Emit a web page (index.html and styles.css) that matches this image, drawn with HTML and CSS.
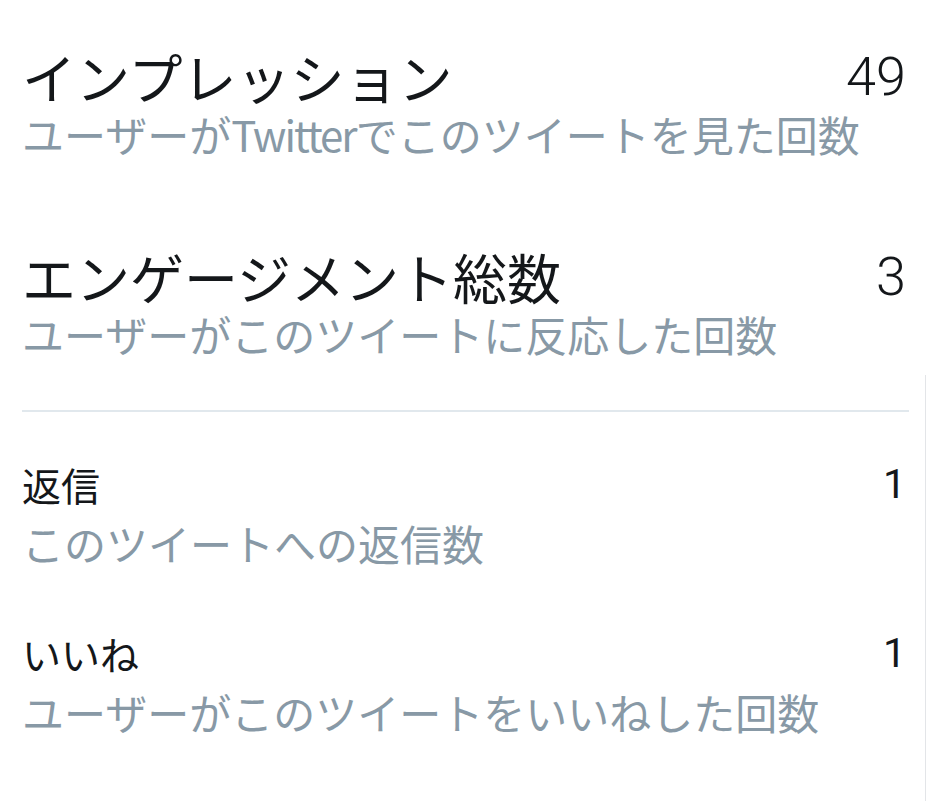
FILE: index.html
```html
<html>
<head>
    <title>ツイートアクティビティ</title>
    <link rel="stylesheet" href="styles.css">
</head>
<body>
<div class="page">
    <div class="content">
        <div class="metric big">
            <div class="head">
                <span class="label">インプレッション</span>
                <span class="value">49</span>
            </div>
            <div class="desc">ユーザーが<span class="latin">Twitter</span>でこのツイートを見た回数</div>
        </div>
        <div class="metric big">
            <div class="head">
                <span class="label">エンゲージメント総数</span>
                <span class="value">3</span>
            </div>
            <div class="desc">ユーザーがこのツイートに反応した回数</div>
        </div>

        <div class="divider"></div>

        <div class="metric small">
            <div class="head">
                <span class="label">返信</span>
                <span class="value">1</span>
            </div>
            <div class="desc">このツイートへの返信数</div>
        </div>
        <div class="metric small">
            <div class="head">
                <span class="label">いいね</span>
                <span class="value">1</span>
            </div>
            <div class="desc">ユーザーがこのツイートをいいねした回数</div>
        </div>
    </div>
    <div class="edge"></div>
</div>
</body>
</html>
```

FILE: styles.css
```css
body {
    margin: 0;
    background-color: #fff;
    font-family: "Noto Sans CJK JP", "Noto Sans", sans-serif;
    color: #14171a;
}
.page {
    display: flex;
    min-height: 801px;
}
.content {
    flex: 1;
    padding: 48px 16px 0 22px;
}
.edge {
    width: 1px;
    margin: 375px 3px 0 0;
    background-color: #e3e5e8;
}
.head {
    display: flex;
    justify-content: space-between;
    align-items: center;
}
.value {
    font-family: Roboto, "Liberation Sans", sans-serif;
    font-weight: 300;
    padding-right: 3px;
}
.desc {
    font-size: 42px;
    line-height: 56px;
    color: #8899a6;
    white-space: nowrap;
}
.desc .latin {
    letter-spacing: -2px;
}
.metric.big .head {
    font-size: 54px;
    line-height: 58px;
}
.metric.big .value {
    font-size: 54px;
}
.metric.big + .metric.big {
    margin-top: 86px;
}
.divider {
    height: 2px;
    background-color: #e1e8ed;
    margin: 48px 0 47px;
}
.metric.small .head {
    font-size: 39px;
    line-height: 50px;
    margin-bottom: 6px;
}
.metric.small .value {
    font-size: 41px;
    font-weight: 400;
}
.metric.small + .metric.small {
    margin-top: 57px;
}
```
